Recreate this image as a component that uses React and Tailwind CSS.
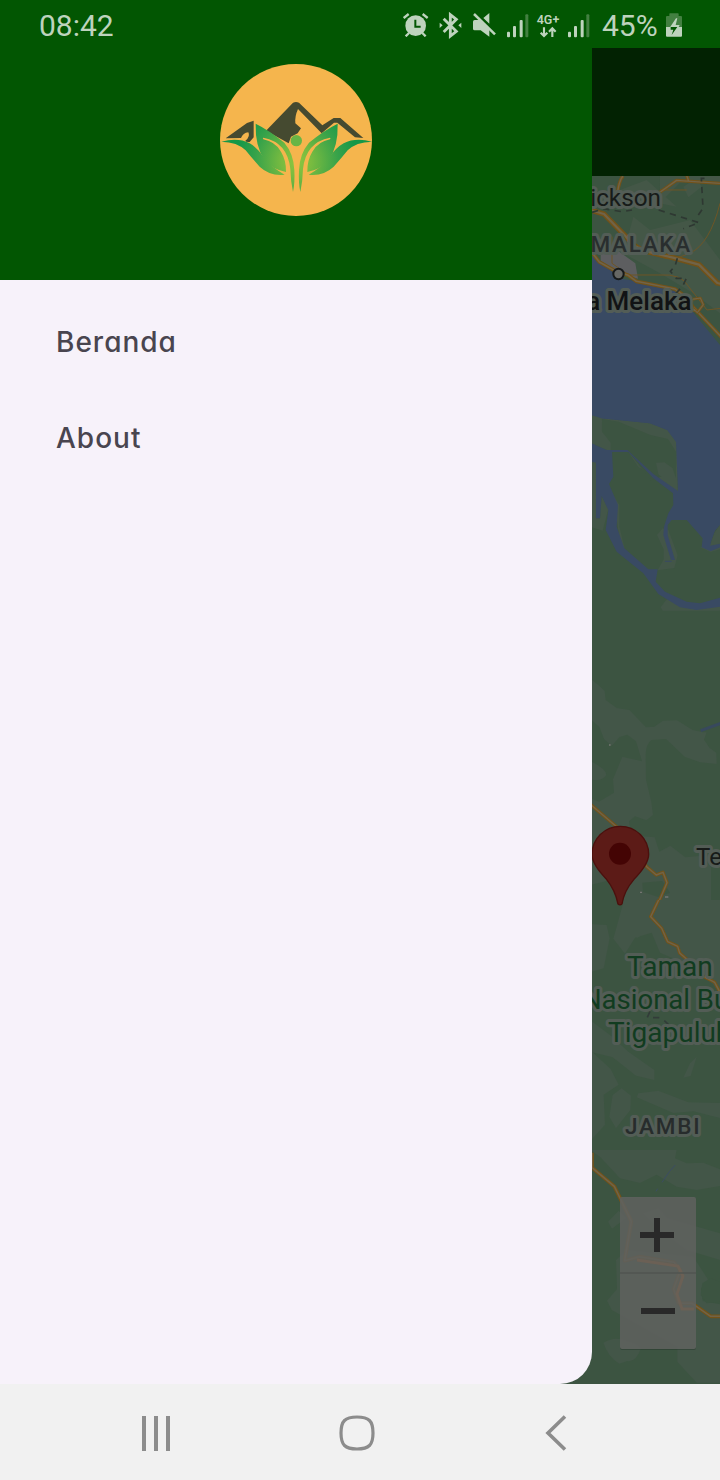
import React from "react";

function Signal() {
  return (
    <svg className="h-6 w-[22px] shrink-0" viewBox="0 0 66 72" fill="#bed3bd">
      <rect x="0" y="53" width="9" height="17" rx="3" />
      <rect x="18" y="36" width="9" height="34" rx="3" />
      <rect x="38" y="18" width="9" height="52" rx="3" />
      <rect x="55" y="1" width="9" height="69" rx="3" fill="#438041" />
    </svg>
  );
}

function StatusBar() {
  return (
    <header className="flex h-12 shrink-0 items-start bg-[#025602] pl-[39px] pt-2 font-[Roboto,sans-serif] text-[#bed3bd]">
      <span className="w-[364px] text-[30px] leading-9">08:42</span>
      <svg className="mt-[5px] h-6 w-[26px] shrink-0" viewBox="0 0 78 72" fill="none" stroke="#bed3bd">
        <circle cx="38" cy="38" r="31" fill="#bed3bd" stroke="none" />
        <path d="M2 15L17 3M59 3L74 15M18 60l-10 10M58 60l10 10" strokeWidth="7" />
        <path d="M37 20v21h16" stroke="#025602" strokeWidth="6" />
      </svg>
      <svg className="ml-[10px] mt-[3px] h-7 w-6 shrink-0" viewBox="0 0 72 84" fill="none" stroke="#bed3bd" strokeWidth="8.5">
        <path d="M14 23l38 38-18 14V11l18 14-38 38" />
        <path d="M2 35l9 8-9 8zM67 35l-9 8 9 8z" fill="#bed3bd" stroke="none" />
      </svg>
      <svg className="ml-[9px] mt-[5px] h-6 w-6 shrink-0" viewBox="0 0 72 72" fill="#bed3bd">
        <path d="M8 21h16L52 46v25L26 52H8q-5 0-5-5V26q0-5 5-5zM34 15L52 0v32z" />
        <path d="M6 3l63 61" stroke="#bed3bd" strokeWidth="7.5" />
      </svg>
      <div className="ml-[11px] mt-[6px]"><Signal /></div>
      <div className="ml-[7px] mt-[5px] flex w-[24px] shrink-0 flex-col items-center">
        <span className="text-[12.5px] font-semibold leading-[14px]">4G+</span>
        <svg className="-mt-px h-3 w-[18px]" viewBox="0 0 54 36" fill="none" stroke="#bed3bd" strokeWidth="6.5">
          <path d="M15 4v26M5 20l10 10 10-10M40 33V7M30 17L40 7l10 10" />
        </svg>
      </div>
      <div className="ml-[8px] mt-[6px]"><Signal /></div>
      <span className="ml-[12px] w-[59px] whitespace-nowrap text-[30px] leading-9">45%</span>
      <svg className="ml-[5px] mt-[5px] h-6 w-4 shrink-0" viewBox="0 0 48 72">
        <path d="M12 1h24q2 0 2 2v6h7q3 0 3 3v30H0V12q0-3 3-3h7V3q0-2 2-2z" fill="#438041" />
        <path d="M0 42h48v26q0 3-3 3H3q-3 0-3-3z" fill="#bed3bd" />
        <path d="M30 16L10 46h26l5-10H29l5-20z" fill="#bed3bd" />
        <path d="M14 42h20L17 66l5-16h-8z" fill="#025602" />
      </svg>
    </header>
  );
}

const LEAF =
  "M137 206Q178 226 223 263Q251 296 253 345Q255 383 249 411Q242 380 241 342Q237 303 217 279Q197 255 160 248Q157 248 160 253Q196 260 213 290Q229 316 228 351Q188 344 164 315Q135 275 137 206z";
const OUTER_LEAF =
  "M34 260Q84 247 119 265Q143 278 164 310Q188 340 224 359Q180 364 149 335Q126 310 107 286Q82 261 34 260z";

function Logo() {
  return (
    <svg className="h-[152px] w-[152px]" viewBox="30 27 456 456">
      <defs>
        <radialGradient id="leaf" gradientUnits="userSpaceOnUse" cx="260" cy="320" r="180">
          <stop offset="0" stopColor="#8cc63f" />
          <stop offset=".25" stopColor="#78bb40" />
          <stop offset=".7" stopColor="#36a24a" />
          <stop offset="1" stopColor="#159848" />
        </radialGradient>
      </defs>
      <circle cx="258" cy="255" r="228" fill="#f5b54d" />
      <g fill="#454a30">
        <path d="M47 250L111 204l20-7v50l-12 14q-12 1-13-4 16-12 9-25-16 2-22 17z" />
        <path d="M168 227L249 143q9-4 18 0l70 68 34-22h20l69 60-25-2-53-44h-10l-37 32L264 162q-10 22-8 43l17 15-10 15-20 10-7 20z" />
      </g>
      <g fill="url(#leaf)">
        <path d={LEAF} />
        <path d={OUTER_LEAF} />
        <g transform="translate(520 0) scale(-1 1)">
          <path d={LEAF} />
          <path d={OUTER_LEAF} />
        </g>
      </g>
      <circle cx="259" cy="257" r="17" fill="#68b545" />
    </svg>
  );
}

function Road({ d, width = 9 }) {
  return (
    <>
      <path d={d} fill="none" stroke="#735218" strokeWidth={width} strokeLinejoin="round" />
      <path d={d} fill="none" stroke="#716347" strokeWidth={width * 0.42} strokeLinejoin="round" />
    </>
  );
}

function MapView() {
  return (
    <svg className="h-[1208px] w-40 font-[Roboto,sans-serif]" viewBox="560 176 160 1208">
      <rect x="560" y="176" width="160" height="1208" fill="#3c5441" />

      {/* Coast and strait */}
      <g transform="translate(580 170) scale(.333333)">
        <path d="M240 18h180v20H300l-60 60zM310 50l40-25 15 25-40 32zM120 60l80-30 90 80-100-20zM160 140l50 40 120-30 90 120v160l-80-60-100-60-110-60z" fill="#445747" />
        <path d="M30 240l40 45 60 42 50 8 110 30 60 75 70 85v300H30z" fill="#394a63" />
        <path d="M62 248l54-4 50 36 8 46-44-12-68-42z" fill="#5d5e60" />
        <path d="M420 100q-30 120-90 150-60 25-90 10M96 200v80l50 35h90q70-5 90 35l55 70 40-5M240 60h80" fill="none" stroke="#6e5526" strokeWidth="3" />
        <Road d="M112 70Q118 30 129 18" width={10} />
        <Road d="M232 72L290 31l130 9M320 16l6 18" width={10} />
        <Road d="M30 120l42 12 92 95 25 15 90 21 78 21 55 55 15 3" width={16} />
        <Road d="M38 250l20 26 50 28 37 12 24 18 116 23 30 22 24 32 85 90" width={11} />
        <Road d="M336 388l25-4 9 20-18 24-18-18zM330 386l12 38" width={8} />
        <path d="M36 127l35-11 55 9 30-5M236 120l121 38-47 18M355 135l14-20-5-90h25M292 265l-7 23-14 16 18 21h30l-10 22-24 26" fill="none" stroke="#2e3832" strokeWidth="5" strokeDasharray="19 16" />
      </g>

      {/* River delta */}
      <g transform="translate(590 410) scale(.333333)">
        <path d="M0 10l35 15 145 15 52 20 26 35 6 150-74-50-75-75H50L0 98zM0 155h18v88H0zM0 243h18v82h12l5-67 20 40-17 64-38-12zM218 355l-17 20 20 43v30l-18 33 50-7 10-38-28-76zM72 260l16 24v66l16 65-14-10zM212 592l18-24 60 14h100v20H218zM390 345l-17 25-13 37 30-2zM330 412l32 14 28-8v-10h-28zM115 126l30 45 50 30 20 0z" fill="#435648" />
        <path d="M36 27l50 8 95 40 53 12 24 38v80l-10-30-25-18-25 1 10 48-26 5-70-91H62v-22L36 65z" fill="#3c5441" />
        <path d="M0 0H390V345L375 362L362 400L390 395V412L362 424L335 412L338 385L290 330H245L233 345V375L255 450H243L220 375L222 350L235 310L250 285L249 250L190 205L115 126H66L70 200L57 222L84 285L80 350L103 415L175 478H203L197 515L225 545L290 575L330 580L390 563V590L320 600L270 592L205 552L160 490L80 425L47 360L55 300L35 258L30 325H18V158L6 155H0V98L50 120H112L190 192L264 243L258 95L232 60L180 40L35 25L0 14z" fill="#394a63" />
        <path d="M390 345l-17 25-13 37 30-6z" fill="#435648" />
        <path d="M225 454h20" stroke="#394a63" strokeWidth="3" />
      </g>

      {/* Inland terrain */}
      <g transform="translate(580 640) scale(.333333)">
        <path d="M30 115l25 20 19 18 3 27 33 24 38 6 50 52 25-2 26-18 42-1 47 29 32 7 10 0-8 22 17 25 20 14 1 34-50-5-45-16-57-54-44 3q-16 12-17 44l1 75 16 67 5 39-20 16-34-12-18 15 4 23 38 22 35 3 14 43 33-18 45 35 48-5 29 35v173H132V710l-100 25V475l25 10 45-27-3-40 28-68 59 14-18-60-26-20-23 7-24 26-23-20-14-36-31-28z" fill="#435648" />
        <path d="M35 365q44 22 44 40-12 20-44 14z" fill="#435648" />
        <path d="M187 728l60-5 23 35-36 13-45-15z" fill="#3c5441" />
        <path d="M362 272l60-22" fill="none" stroke="#38495d" strokeWidth="9" />
        <Road d="M30 492l85 73 85 115 29 25 20-8 12 31-47 110" width={10} />
        <path d="M180 757h6M255 771h10M87 315h5" stroke="#747571" strokeWidth="4" />
      </g>

      {/* Marker */}
      <g transform="translate(580 641) scale(.333333)">
        <path d="M114 789q-8-41-36-76Q36 670 36 640a85 84 0 01170 0q0 30-44 75-30 35-36 74-6 5-12 0z" fill="#5c1b17" stroke="#4b100d" strokeWidth="4" />
        <circle cx="120" cy="638" r="33" fill="#440404" />
      </g>

      {/* National park */}
      <g transform="translate(580 900) scale(.333333)">
        <path d="M132 0h288v280l-50-62-60-30-70-30-25-60-50 15-30 48-35-45zM30 72l50 3 9 40-18 90-41 12zM30 360l60 45 55 50 78 55v30l-55-13-70-55-68-17zM30 450l62 57 24 47-45 30 4 90-45 50zM98 585l27-20 28 22-2 43-43 55-20-35zM175 580l60-8 90 35 95 2v45l-80-20-60 5-110-47zM180 72l30-8 20 20-60 30zM330 490l20-20-18 58-22 5z" fill="#435648" />
        <Road d="M236 0l-24 50 33 35 18 40 30 14 6 20 34 30 24 33 47 25 16 30" width={10} />
        <path d="M202 352l8-18M219 353h19M253 362l12 11" stroke="#323c39" strokeWidth="5" />
      </g>

      {/* Southern roads */}
      <g transform="translate(580 1150) scale(.333333)">
        <path d="M30 0h260l-5 25 35 15 50-2 50 20v50l-70 12-60-10-60-36-50 25-60-14-60-65zM84 215l32-33 22 22-42 32zM108 330l32-30 200 20 45 70-22 25 5 38 52 10v235h-70l-58-63v-45L95 480l-14-28 30-35zM70 578q35-20 70-5 38 10 42 25-15 40-40 35l-24 8q-34-20-48-63zM190 190l45-15 28 30 157 45v80l-100-30-80-60z" fill="#435648" />
        <path d="M367 400l25-15 28 10v60l-40 5-18-25z" fill="#3c5441" />
        <Road d="M36 8v45l67 56 51 105-20 118 44-12 104 17 19 24-20 56 15 43h40l56 39h30" width={11} />
        <path d="M286 45l-18 20-22 32M228 124l5-8" stroke="#3b4c62" strokeWidth="3" fill="none" />
      </g>

      {/* Place labels */}
      <g stroke="#535d56" strokeWidth="6" strokeLinejoin="round" paintOrder="stroke">
        <text x="661" y="206" textAnchor="end" fontSize="24.3" fill="#171b19">Dickson</text>
        <text x="590.5" y="251.5" fontSize="22.5" fontWeight="500" letterSpacing="1.7" fill="#292e2e">MALAKA</text>
        <text x="691.5" y="310" textAnchor="end" fontSize="26" fontWeight="500" fill="#111315">Bandaraya Melaka</text>
        <text x="696" y="865" fontSize="24" fill="#171b19">Tebo</text>
        <g fontSize="28" fill="#113c20">
          <text x="627" y="976">Taman</text>
          <text x="582" y="1009" fontSize="27.5">Nasional Bukit</text>
          <text x="608" y="1042">Tigapuluh</text>
        </g>
        <text x="625" y="1134" fontSize="22.5" fontWeight="500" letterSpacing="1.8" fill="#272c2c">JAMBI</text>
      </g>
      <circle cx="618.5" cy="274" r="5.2" fill="#666764" stroke="#171a1b" strokeWidth="2" />

      {/* Zoom controls */}
      <rect x="620" y="1197.5" width="76" height="152.5" rx="2" fill="#1d2b21" opacity=".35" />
      <rect x="620" y="1197" width="76" height="152" rx="2" fill="#646563" fillOpacity=".82" />
      <path d="M637 1260l41 6 5 10-6 18 5 15h12" fill="none" stroke="#6b6055" strokeWidth="3" />
      <path d="M620 1273h76" stroke="#505551" strokeWidth="1.5" />
      <path d="M640 1235h34M657 1218v34M641 1311h34" stroke="#292929" strokeWidth="6" />
    </svg>
  );
}

export default function App() {
  return (
    <div className="flex h-[1480px] w-[720px] flex-col overflow-hidden bg-[#f1f1f1]">
      <StatusBar />
      <main className="flex h-[1336px] shrink-0">
        <aside className="z-10 flex w-[592px] shrink-0 flex-col overflow-hidden rounded-br-[32px] bg-[#f7f2fa]">
          <div className="flex h-[232px] shrink-0 justify-center bg-[#025602] pt-4">
            <Logo />
          </div>
          <nav className="flex flex-col pt-[14px] font-[Inter,sans-serif] text-[28px] font-medium leading-none text-[#49454f] [font-feature-settings:'cv11']">
            <a className="flex h-24 items-center pl-14"><span className="tracking-[1px]">Beranda</span></a>
            <a className="flex h-24 items-center pl-14"><span className="tracking-[1px]">About</span></a>
          </nav>
        </aside>
        <section className="-ml-8 flex w-40 shrink-0 flex-col">
          <div className="h-32 shrink-0 bg-[#022202]" />
          <MapView />
        </section>
      </main>
      <footer className="flex h-24 shrink-0 items-center pl-[142px] pt-[2px]">
        <svg className="h-[35px] w-7" viewBox="0 0 28 35" fill="none" stroke="#8c8c8c" strokeWidth="4">
          <path d="M2 0v35M14 0v35M26 0v35" />
        </svg>
        <svg className="ml-[169px] h-9 w-9" viewBox="0 0 36 36" fill="none" stroke="#8c8c8c" strokeWidth="3.2">
          <path d="M18 2C30 2 34 6 34 18S30 34 18 34S2 30 2 18S6 2 18 2z" />
        </svg>
        <svg className="ml-[170px] h-9 w-[22px]" viewBox="0 0 22 36" fill="none" stroke="#8c8c8c" strokeWidth="3.6">
          <path d="M20 1.5L3 18l17 16.5" />
        </svg>
      </footer>
    </div>
  );
}
